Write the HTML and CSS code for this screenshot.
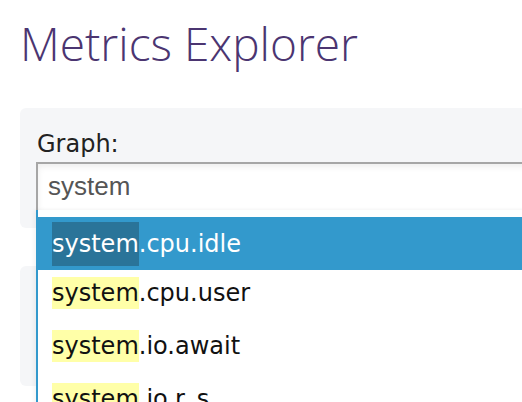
FILE: index.html
```html
<!DOCTYPE html>
<html>
<head>
<meta charset="utf-8">
<link rel="stylesheet" href="styles.css">
</head>
<body>
<h1 class="title">Metrics Explorer</h1>
<div class="panel">
  <div class="label">Graph:</div>
  <div class="field">
    <div class="input">system</div>
    <ul class="menu">
      <li class="item active"><span class="hit">system</span>.cpu.idle</li>
      <li class="item"><span class="hit">system</span>.cpu.user</li>
      <li class="item"><span class="hit">system</span>.io.await</li>
      <li class="item"><span class="hit">system</span>.io.r_s</li>
    </ul>
  </div>
</div>
<div class="panel panel-second"></div>
</body>
</html>
```

FILE: styles.css
```css
html, body {
  margin: 0;
  padding: 0;
  overflow: hidden;
  background: #ffffff;
}
body {
  width: 522px;
  height: 402px;
  font-family: "DejaVu Sans", sans-serif;
}
.title {
  margin: 10px 0 0 20px;
  font-family: "Open Sans", sans-serif;
  font-weight: 300;
  font-size: 46px;
  line-height: 66px;
  color: #4b3571;
  white-space: nowrap;
}
.panel {
  margin: 32px 0 0 20px;
  width: 700px;
  height: 120px;
  box-sizing: border-box;
  padding: 22px 0 0 17px;
  background: #f5f6f8;
  border-radius: 6px;
}
.panel-second {
  margin-top: 38px;
  padding: 0;
}
.label {
  font-size: 24px;
  line-height: 28px;
  color: #222;
}
.field {
  position: relative;
  margin: 4px 0 0 -1px;
}
.input {
  height: 48px;
  box-sizing: border-box;
  border-top: 2px solid #a6a6a6;
  border-left: 2px solid #a6a6a6;
  background: #fff;
  box-shadow: inset 0 3px 6px rgba(0, 0, 0, 0.07);
  padding-left: 10px;
  font-family: "Liberation Sans", Arial, sans-serif;
  font-size: 26px;
  line-height: 45px;
  color: #555;
}
.menu {
  position: absolute;
  left: 0;
  top: 48px;
  width: 700px;
  margin: 0;
  padding: 7px 0 0 0;
  list-style: none;
  background: #fff;
  border-left: 2px solid #3399cc;
  box-shadow: -2px 0 4px rgba(0, 0, 0, 0.05);
  z-index: 2;
}
.item {
  height: 53px;
  box-sizing: border-box;
  padding: 7px 0 0 14px;
  font-size: 24px;
  line-height: 32px;
  color: #111;
  white-space: nowrap;
}
.hit {
  display: inline-block;
  background: #ffffa8;
}
.item.active {
  padding-top: 5px;
  background: #3399cc;
  color: #fff;
}
.item.active .hit {
  background: #2a7499;
  padding: 6px 0;
}
```
